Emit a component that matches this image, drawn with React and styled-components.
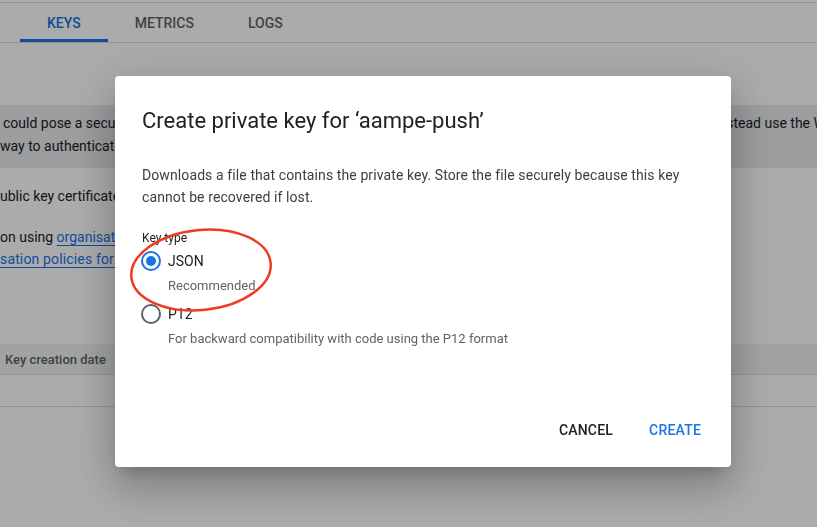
import React, { useState } from 'react';
import styled, { createGlobalStyle } from 'styled-components';

const GlobalStyle = createGlobalStyle`
  html, body {
    margin: 0;
    padding: 0;
    background: #ffffff;
    font-family: Roboto, "Liberation Sans", Arial, sans-serif;
    overflow: hidden;
  }
`;

const Page = styled.div`
  width: 817px;
  height: 527px;
  padding-top: 2px;
  box-sizing: border-box;
  color: #202124;
  overflow: hidden;
`;

const TabBar = styled.div`
  display: flex;
  height: 39px;
  padding-left: 20px;
  border-top: 1px solid #dadce0;
  border-bottom: 1px solid #dadce0;
`;

const Tab = styled.div`
  display: flex;
  align-items: center;
  padding: 0 27px;
  font-size: 14px;
  font-weight: 500;
  color: ${(p) => (p.$active ? '#1a73e8' : '#5f6368')};
  box-shadow: ${(p) => (p.$active ? 'inset 0 -3px 0 #1a73e8' : 'none')};
`;

const Content = styled.div`
  display: flex;
  flex-direction: column;
  padding-top: 62px;
  font-size: 14px;
`;

const Banner = styled.div`
  background: #e8eaed;
  padding: 7px 0 10px;
  line-height: 23px;
`;

const Line = styled.div`
  white-space: nowrap;
  line-height: ${(p) => p.$lh || 22}px;
  padding-left: ${(p) => p.$indent || 0}px;
  letter-spacing: ${(p) => p.$spacing || 0}px;
`;

const Para = styled.div`
  margin-top: ${(p) => p.$top}px;
`;

const Link = styled.span`
  color: #1a73e8;
  text-decoration: underline;
  text-underline-offset: 3px;
`;

const TableHead = styled.div`
  margin-top: 74px;
  height: 30px;
  display: flex;
  align-items: center;
  padding-left: 5px;
  background: #f1f3f4;
  border-bottom: 1px solid #dadce0;
  font-size: 13px;
  font-weight: 500;
  color: #5f6368;
`;

const TableRow = styled.div`
  height: 31px;
  border-bottom: 1px solid #dadce0;
`;

const Scrim = styled.div`
  position: fixed;
  inset: 0;
  background: rgba(0, 0, 0, 0.33);
  display: flex;
  align-items: flex-start;
  padding: 76px 0 0 115px;
`;

const Dialog = styled.div`
  position: relative;
  width: 616px;
  height: 391px;
  box-sizing: border-box;
  background: #fff;
  border-radius: 4px;
  padding: 30px 30px 19px 27px;
  display: flex;
  flex-direction: column;
  box-shadow: 0 11px 15px -7px rgba(0, 0, 0, 0.2),
    0 24px 38px 3px rgba(0, 0, 0, 0.14), 0 9px 46px 8px rgba(0, 0, 0, 0.12);
`;

const Title = styled.h2`
  margin: 0;
  font-size: 22px;
  font-weight: 400;
  line-height: 30px;
  color: #202124;
`;

const Body = styled.p`
  margin: 28px 0 0;
  font-size: 14px;
  line-height: 22px;
  letter-spacing: 0.1px;
  color: #3c4043;
`;

const FieldLabel = styled.div`
  margin-top: 22px;
  font-size: 12px;
  line-height: 16px;
  color: #202124;
`;

const Option = styled.label`
  display: grid;
  grid-template-columns: 20px 1fr;
  column-gap: 6px;
  margin-top: ${(p) => p.$top}px;
  cursor: pointer;
`;

const RadioCircle = styled.span`
  width: 20px;
  height: 20px;
  box-sizing: border-box;
  border-radius: 50%;
  border: 2px solid ${(p) => (p.$checked ? '#1a73e8' : '#5f6368')};
  display: flex;
  align-items: center;
  justify-content: center;
  margin-left: -1px;

  &::after {
    content: '';
    width: 10px;
    height: 10px;
    border-radius: 50%;
    background: #1a73e8;
    display: ${(p) => (p.$checked ? 'block' : 'none')};
  }
`;

const OptionName = styled.span`
  font-size: 14px;
  line-height: 20px;
  color: #202124;
`;

const OptionHint = styled.span`
  grid-column: 2;
  margin-top: 7px;
  font-size: 13px;
  line-height: 16px;
  color: #5f6368;
`;

const Actions = styled.div`
  margin-top: auto;
  display: flex;
  justify-content: flex-end;
  gap: 12px;
`;

const ActionButton = styled.button`
  height: 36px;
  padding: 0 12px;
  border: none;
  background: none;
  font-family: inherit;
  font-size: 14px;
  font-weight: 500;
  letter-spacing: 0.2px;
  color: ${(p) => (p.$primary ? '#1a73e8' : '#202124')};
  cursor: pointer;
  margin-right: ${(p) => (p.$primary ? '-12px' : '0')};
`;

const Annotation = styled.svg`
  position: absolute;
  left: 10px;
  top: 145px;
  pointer-events: none;
`;

const App = () => {
  const [keyType, setKeyType] = useState('json');

  return (
    <>
      <GlobalStyle />
      <Page>
        <TabBar>
          <Tab $active>KEYS</Tab>
          <Tab>METRICS</Tab>
          <Tab>LOGS</Tab>
        </TabBar>
        <Content>
          <Banner>
            <Line $lh={23} $indent={3}>
              could pose a security risks if compromised. We recommend that you avoid downloading service account keys, and instead use the Workload Identity Federation
            </Line>
            <Line $lh={23}>way to authenticate service accounts on Google Cloud here.</Line>
          </Banner>
          <Para $top={17}>
            <Line>ublic key certificate</Line>
          </Para>
          <Para $top={19}>
            <Line>
              on using <Link>organisation policies</Link>.
            </Line>
            <Line $spacing={0.15}>
              <Link>sation policies for service accounts</Link>
            </Line>
          </Para>
          <TableHead>Key creation date</TableHead>
          <TableRow />
        </Content>
      </Page>

      <Scrim>
        <Dialog>
          <Title>Create private key for ‘aampe-push’</Title>
          <Body>
            Downloads a file that contains the private key. Store the file securely because this key
            <br />
            cannot be recovered if lost.
          </Body>
          <FieldLabel>Key type</FieldLabel>
          <Option $top={5} onClick={() => setKeyType('json')}>
            <RadioCircle $checked={keyType === 'json'} />
            <OptionName>JSON</OptionName>
            <OptionHint>Recommended</OptionHint>
          </Option>
          <Option $top={10} onClick={() => setKeyType('p12')}>
            <RadioCircle $checked={keyType === 'p12'} />
            <OptionName>P12</OptionName>
            <OptionHint>For backward compatibility with code using the P12 format</OptionHint>
          </Option>
          <Actions>
            <ActionButton>CANCEL</ActionButton>
            <ActionButton $primary>CREATE</ActionButton>
          </Actions>

          <Annotation width="160" height="100" viewBox="0 0 160 100">
            <ellipse
              cx="76"
              cy="49"
              rx="70"
              ry="40"
              fill="none"
              stroke="#f03a22"
              strokeWidth="2.5"
              transform="rotate(-6 76 49)"
            />
          </Annotation>
        </Dialog>
      </Scrim>
    </>
  );
};

export default App;
